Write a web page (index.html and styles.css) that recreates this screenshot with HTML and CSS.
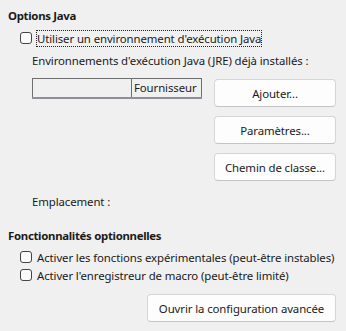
FILE: index.html
```html
<!DOCTYPE html>
<html lang="fr">
<head>
<meta charset="utf-8">
<link rel="stylesheet" href="styles.css">
</head>
<body>
<div class="page">
  <div class="section-title">Options Java</div>
  <label class="check-row first">
    <span class="box"></span>
    <span class="focus">Utiliser un environnement d'exécution Java</span>
  </label>
  <div class="indent">
    <div class="label jre">Environnements d'exécution Java (JRE) déjà installés :</div>
    <div class="jre-row">
      <div class="table">
        <div class="thead">
          <div class="col col1"></div>
          <div class="col col2">Fournisseur</div>
        </div>
        <div class="tfoot"></div>
      </div>
      <div class="btns">
        <button class="btn">Ajouter...</button>
        <button class="btn">Paramètres...</button>
        <button class="btn">Chemin de classe...</button>
      </div>
    </div>
    <div class="label loc">Emplacement :</div>
  </div>
  <div class="section-title s2">Fonctionnalités optionnelles</div>
  <label class="check-row">
    <span class="box"></span>
    <span>Activer les fonctions expérimentales (peut-être instables)</span>
  </label>
  <label class="check-row">
    <span class="box"></span>
    <span>Activer l'enregistreur de macro (peut-être limité)</span>
  </label>
  <div class="bottom">
    <button class="btn wide">Ouvrir la configuration avancée</button>
  </div>
</div>
</body>
</html>
```
FILE: styles.css
```css
html, body {
  margin: 0;
  padding: 0;
  background: #f0f0f0;
}
body {
  font-family: "Noto Sans", "Open Sans", sans-serif;
  font-size: 11.4px;
  letter-spacing: -0.1px;
  color: #1a1a1a;
}
.page {
  width: 346px;
  height: 331px;
  box-sizing: border-box;
  padding: 8px 10px 0 8px;
  white-space: nowrap;
}
.section-title {
  font-weight: 700;
  height: 16px;
  line-height: 16px;
  letter-spacing: -0.3px;
}
.s2 {
  margin-top: 18px;
}
.check-row {
  display: flex;
  align-items: center;
  height: 18px;
  margin-left: 12px;
  gap: 5px;
}
.check-row.first {
  margin-top: 5px;
}
.s2 + .check-row {
  margin-top: 4px;
}
.box {
  width: 10px;
  height: 10px;
  border: 1px solid #444;
  border-radius: 3px;
  background: #fbfbfb;
  flex: none;
}
.focus {
  outline: 1px dotted #222;
  outline-offset: 0;
  line-height: 15px;
}
.indent {
  padding-left: 24px;
}
.label {
  height: 16px;
  line-height: 16px;
}
.jre {
  margin-top: 6px;
}
.jre-row {
  display: flex;
  justify-content: space-between;
  margin-top: 9px;
}
.table {
  width: 170px;
}
.thead {
  display: flex;
  height: 18px;
  border: 1px solid #6e6e6e;
  border-bottom: none;
}
.col {
  line-height: 18px;
}
.col1 {
  width: 98px;
  border-right: 1px solid #6e6e6e;
}
.col2 {
  padding-left: 2px;
}
.tfoot {
  height: 2px;
  background: #8e8f98;
}
.btns {
  display: flex;
  flex-direction: column;
  gap: 9px;
  width: 122px;
  margin-top: 1px;
}
.btn {
  font: inherit;
  letter-spacing: inherit;
  color: #1a1a1a;
  height: 28px;
  background: #fdfdfd;
  border: 1px solid #d6d6d6;
  border-bottom-color: #c4c4c4;
  border-radius: 4px;
  padding: 0;
}
.loc {
  margin-top: 13px;
}
.bottom {
  display: flex;
  justify-content: flex-end;
  margin-top: 10px;
}
.wide {
  width: 189px;
}
```
